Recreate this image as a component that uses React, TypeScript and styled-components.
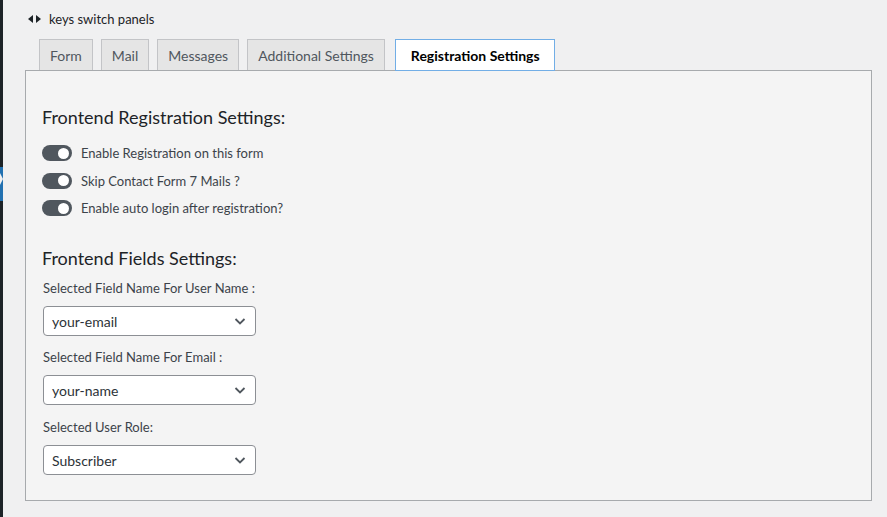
import React from "react";
import styled, { createGlobalStyle } from "styled-components";

const GlobalStyle = createGlobalStyle`
  html, body { margin: 0; padding: 0; }
  body {
    background: #f0f0f1;
    font-family: Lato, "Noto Sans", sans-serif;
    color: #3c434a;
    width: 887px;
    height: 517px;
    overflow: hidden;
  }
`;

const Page = styled.div`
  display: flex;
  height: 517px;
`;

const Strip = styled.div`
  width: 3px;
  flex: none;
  display: flex;
  flex-direction: column;
  background: #1d2327;
`;

const StripTop = styled.div`
  height: 167px;
`;

const StripActive = styled.div`
  height: 34px;
  background: #2271b1;
  position: relative;
`;

const Notch = styled.svg`
  position: absolute;
  left: 0;
  top: 6px;
`;

const Main = styled.div`
  flex: 1;
  padding: 10px 15px 0 22px;
  display: flex;
  flex-direction: column;
`;

const Hint = styled.div`
  display: flex;
  align-items: center;
  gap: 8px;
  height: 18px;
  padding-left: 3px;
  font-size: 13px;
  color: #1d2327;
`;

const Tabs = styled.div`
  display: flex;
  gap: 8px;
  margin-top: 11px;
  padding-left: 14px;
  position: relative;
  z-index: 1;
  margin-bottom: -1px;
`;

const Tab = styled.div<{ $active?: boolean }>`
  padding: 0 ${(p) => (p.$active ? "14px 0 15px" : "10px")};
  display: flex;
  align-items: center;
  font-size: 14px;
  box-sizing: border-box;
  height: ${(p) => (p.$active ? "32px" : "31px")};
  border: 1px solid ${(p) => (p.$active ? "#72aee6" : "#c3c4c7")};
  border-bottom: ${(p) => (p.$active ? "1px solid #72aee6" : "none")};
  background: ${(p) => (p.$active ? "#fff" : "#e5e5e5")};
  color: ${(p) => (p.$active ? "#000" : "#50575e")};
  font-weight: ${(p) => (p.$active ? 700 : 400)};
  margin-left: ${(p) => (p.$active ? "2px" : "0")};
`;

const Panel = styled.div`
  border: 1px solid #a7aaad;
  background: #f4f4f4;
  height: 431px;
  box-sizing: border-box;
  padding: 0 16px;
`;

const Heading = styled.h3<{ $top: number }>`
  margin: ${(p) => p.$top}px 0 0 0;
  font-size: 18px;
  line-height: 24px;
  font-weight: 400;
  color: #1d2327;
`;

const Toggles = styled.div`
  display: flex;
  flex-direction: column;
  gap: 11.5px;
  margin-top: 16px;
`;

const ToggleRow = styled.div`
  display: flex;
  align-items: center;
  gap: 9px;
  font-size: 13px;
  line-height: 16px;
  color: #3c434a;
`;

const Switch = styled.span`
  width: 30px;
  height: 16px;
  border-radius: 8px;
  background: #50575e;
  position: relative;
  flex: none;
`;

const Knob = styled.span`
  position: absolute;
  right: 3px;
  top: 2.5px;
  width: 11px;
  height: 11px;
  border-radius: 50%;
  background: #fff;
`;

const Field = styled.div<{ $top: number }>`
  margin-top: ${(p) => p.$top}px;
  display: flex;
  flex-direction: column;
  padding-left: 1px;
`;

const Label = styled.div`
  font-size: 13px;
  line-height: 18px;
  color: #3c434a;
`;

const Select = styled.div`
  margin-top: 9px;
  width: 213px;
  height: 30px;
  box-sizing: border-box;
  border: 1px solid #8c8f94;
  border-radius: 4px;
  background: #fff;
  display: flex;
  align-items: center;
  justify-content: space-between;
  padding: 0 7px 0 8px;
  font-size: 14px;
  color: #2c3338;
`;

function Chevron() {
  return (
    <svg width="16" height="16" viewBox="0 0 16 16">
      <path d="M3.5 6 L8 10.5 L12.5 6" fill="none" stroke="#50575e" strokeWidth="1.8" />
    </svg>
  );
}

function Arrows() {
  return (
    <svg width="13" height="8" viewBox="0 0 13 8">
      <path d="M0 4 L5 0 L5 8 Z" fill="#1d2327" />
      <path d="M13 4 L8 0 L8 8 Z" fill="#1d2327" />
    </svg>
  );
}

const toggles = [
  "Enable Registration on this form",
  "Skip Contact Form 7 Mails ?",
  "Enable auto login after registration?",
];

const fields = [
  { label: "Selected Field Name For User Name :", value: "your-email", top: 9 },
  { label: "Selected Field Name For Email :", value: "your-name", top: 12 },
  { label: "Selected User Role:", value: "Subscriber", top: 13 },
];

export default function App() {
  return (
    <>
      <GlobalStyle />
      <Page>
        <Strip>
          <StripTop />
          <StripActive>
            <Notch width="3" height="12" viewBox="0 0 3 12">
              <path d="M0 0 L3 6 L0 12 Z" fill="#f0f0f1" />
            </Notch>
          </StripActive>
        </Strip>
        <Main>
          <Hint>
            <Arrows />
            <span>keys switch panels</span>
          </Hint>
          <Tabs>
            <Tab>Form</Tab>
            <Tab>Mail</Tab>
            <Tab>Messages</Tab>
            <Tab>Additional Settings</Tab>
            <Tab $active>Registration Settings</Tab>
          </Tabs>
          <Panel>
            <Heading $top={34}>Frontend Registration Settings:</Heading>
            <Toggles>
              {toggles.map((t) => (
                <ToggleRow key={t}>
                  <Switch>
                    <Knob />
                  </Switch>
                  <span>{t}</span>
                </ToggleRow>
              ))}
            </Toggles>
            <Heading $top={30}>Frontend Fields Settings:</Heading>
            {fields.map((f) => (
              <Field key={f.label} $top={f.top}>
                <Label>{f.label}</Label>
                <Select>
                  <span>{f.value}</span>
                  <Chevron />
                </Select>
              </Field>
            ))}
          </Panel>
        </Main>
      </Page>
    </>
  );
}
